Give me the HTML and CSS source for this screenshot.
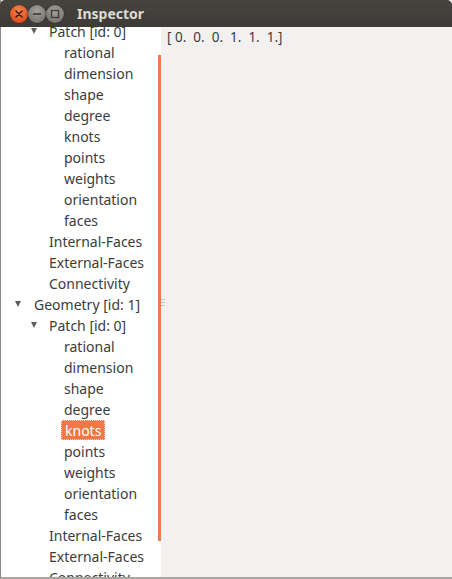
FILE: index.html
```html
<!DOCTYPE html>
<html>
<head>
<meta charset="utf-8">
<link rel="stylesheet" href="styles.css">
</head>
<body>
<div class="window">
  <div class="titlebar">
    <div class="buttons">
      <span class="btn close"><svg width="18" height="18" viewBox="0 0 18 18"><path d="M6 6 L12 12 M12 6 L6 12" stroke="#3a1d10" stroke-width="1.6" stroke-linecap="round"/></svg></span>
      <span class="btn"><svg width="18" height="18" viewBox="0 0 18 18"><path d="M5 9 H13" stroke="#3c3b37" stroke-width="1.6"/></svg></span>
      <span class="btn"><svg width="18" height="18" viewBox="0 0 18 18"><rect x="5.5" y="5.5" width="7" height="7" fill="none" stroke="#3c3b37" stroke-width="1.3"/></svg></span>
    </div>
    <div class="title">Inspector</div>
  </div>
  <div class="body">
    <div class="tree">
      <ul class="rows">
        <li class="row l2"><span class="exp"></span>Patch [id: 0]</li>
        <li class="row l3">rational</li>
        <li class="row l3">dimension</li>
        <li class="row l3">shape</li>
        <li class="row l3">degree</li>
        <li class="row l3">knots</li>
        <li class="row l3">points</li>
        <li class="row l3">weights</li>
        <li class="row l3">orientation</li>
        <li class="row l3">faces</li>
        <li class="row l2">Internal-Faces</li>
        <li class="row l2">External-Faces</li>
        <li class="row l2">Connectivity</li>
        <li class="row l1"><span class="exp"></span>Geometry [id: 1]</li>
        <li class="row l2"><span class="exp"></span>Patch [id: 0]</li>
        <li class="row l3">rational</li>
        <li class="row l3">dimension</li>
        <li class="row l3">shape</li>
        <li class="row l3">degree</li>
        <li class="row l3"><span class="sel">knots</span></li>
        <li class="row l3">points</li>
        <li class="row l3">weights</li>
        <li class="row l3">orientation</li>
        <li class="row l3">faces</li>
        <li class="row l2">Internal-Faces</li>
        <li class="row l2">External-Faces</li>
        <li class="row l2">Connectivity</li>
      </ul>
      <div class="scrollthumb"></div>
    </div>
    <div class="handle"><span class="grip"></span><span class="grip"></span><span class="grip"></span></div>
    <div class="content">[ 0.  0.  0.  1.  1.  1.]</div>
  </div>
</div>
</body>
</html>
```

FILE: styles.css
```css
html, body {
  margin: 0;
  padding: 0;
  background: #f2f1f0;
}
body {
  width: 452px;
  height: 579px;
  overflow: hidden;
  font-family: "Noto Sans", "DejaVu Sans", sans-serif;
}
.window {
  width: 452px;
  height: 579px;
  display: flex;
  flex-direction: column;
  box-sizing: border-box;
  border-left: 1px solid #8c8a86;
  border-bottom: 2px solid #a8a6a2;
  background: #f2f1f0;
}
.titlebar {
  height: 27px;
  flex: none;
  margin-left: -1px;
  display: flex;
  align-items: center;
  background: linear-gradient(#45443f, #3c3b37);
  border-radius: 5px 5px 0 0;
}
.buttons {
  display: flex;
  gap: 0;
  padding-left: 10px;
}
.btn {
  width: 18px;
  height: 18px;
  border-radius: 50%;
  background: radial-gradient(circle at 50% 35%, #a3a19c, #7a7873 70%);
  display: block;
  box-shadow: 0 0 0 0.5px #2c2b28;
}
.btn svg { display: block; }
.btn.close {
  background: radial-gradient(circle at 50% 35%, #f5874f, #e2501f 70%);
}
.title {
  margin-left: 13px;
  color: #dfdbd2;
  font-family: "Noto Sans", "DejaVu Sans", sans-serif;
  font-weight: bold;
  font-size: 14px;
  line-height: 27px;
}
.body {
  flex: 1;
  display: flex;
  min-height: 0;
}
.tree {
  position: relative;
  width: 160px;
  flex: none;
  background: #ffffff;
  overflow: hidden;
}
.rows {
  list-style: none;
  margin: -6px 0 0 0;
  padding: 0;
}
.row {
  height: 21px;
  line-height: 21px;
  font-size: 14px;
  color: #3c3c3c;
  white-space: nowrap;
  position: relative;
}
.l1 { padding-left: 33px; }
.l2 { padding-left: 48px; }
.l3 { padding-left: 63px; }
.exp {
  position: absolute;
  top: 7px;
  width: 0;
  height: 0;
  border-left: 3.5px solid transparent;
  border-right: 3.5px solid transparent;
  border-top: 6px solid #5d5d5a;
}
.l1 .exp { left: 14px; }
.l2 .exp { left: 30px; }
.sel {
  display: inline-block;
  margin-left: -3px;
  padding: 0 3px;
  height: 20px;
  line-height: 19px;
  background: #f07746;
  color: #ffffff;
  box-sizing: border-box;
  border: 1px dotted #fbd2bf;
}
.scrollthumb {
  position: absolute;
  left: 157px;
  top: 28px;
  width: 3px;
  height: 486px;
  background: #f07a4a;
}
.handle {
  width: 4px;
  flex: none;
  display: flex;
  flex-direction: column;
  justify-content: center;
  align-items: center;
  gap: 2px;
  background: #f2f1f0;
}
.grip {
  display: block;
  width: 4px;
  height: 1px;
  background: #c9c7c3;
}
.content {
  flex: 1;
  padding: 2px 0 0 2px;
  font-size: 13.5px;
  line-height: 17px;
  color: #3c3c3c;
  white-space: pre;
}
```
